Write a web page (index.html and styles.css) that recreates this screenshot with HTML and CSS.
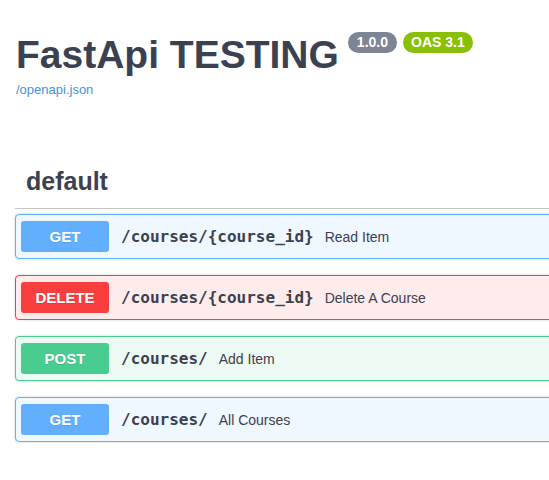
FILE: index.html
```html
<!DOCTYPE html>
<html lang="en">
<head>
<meta charset="utf-8">
<title>FastApi TESTING</title>
<link rel="stylesheet" href="styles.css">
</head>
<body>
<div class="wrapper">
  <div class="info">
    <h2 class="title">FastApi TESTING<span class="badges"><span class="badge version">1.0.0</span><span class="badge oas">OAS 3.1</span></span></h2>
    <a class="base-url" href="#">/openapi.json</a>
  </div>
  <section class="tag-section">
    <h3 class="tag">default</h3>
    <div class="ops">
      <div class="opblock get">
        <span class="method">GET</span>
        <span class="path">/courses/{course_id}</span>
        <span class="desc">Read Item</span>
      </div>
      <div class="opblock delete">
        <span class="method">DELETE</span>
        <span class="path">/courses/{course_id}</span>
        <span class="desc">Delete A Course</span>
      </div>
      <div class="opblock post">
        <span class="method">POST</span>
        <span class="path">/courses/</span>
        <span class="desc">Add Item</span>
      </div>
      <div class="opblock get">
        <span class="method">GET</span>
        <span class="path">/courses/</span>
        <span class="desc">All Courses</span>
      </div>
    </div>
  </section>
</div>
</body>
</html>
```

FILE: styles.css
```css
html, body {
  margin: 0;
  padding: 0;
  overflow: hidden;
  background: #fff;
}
body {
  font-family: "Liberation Sans", Arial, sans-serif;
  color: #3b4151;
}
.wrapper {
  width: 640px;
  padding: 0 0 0 15px;
}
.info {
  padding: 31px 0 0 1px;
}
.title {
  margin: 0;
  font-size: 39px;
  font-weight: 700;
  line-height: 48px;
  color: #3b4151;
  display: flex;
  align-items: flex-start;
}
.badges {
  display: flex;
  gap: 6px;
  margin: 1px 0 0 9px;
}
.badge {
  display: inline-block;
  font-size: 14px;
  font-weight: 700;
  color: #fff;
  line-height: 21px;
  height: 21px;
  padding: 0 9px;
  border-radius: 57px;
}
.version { background: #7d8492; }
.oas { background: #89bf04; padding: 0 8px; }
.base-url {
  display: block;
  margin-top: 3px;
  font-size: 13px;
  line-height: 16px;
  color: #4990e2;
  text-decoration: none;
}
.tag-section {
  margin-top: 68px;
}
.tag {
  margin: 0;
  padding: 0 0 12px 11px;
  font-size: 25px;
  line-height: 30px;
  font-weight: 700;
  border-bottom: 1px solid #c4c6cb;
}
.ops {
  padding-top: 5px;
}
.opblock {
  display: flex;
  align-items: center;
  height: 43px;
  padding: 0 5px;
  margin-bottom: 16px;
  border: 1px solid;
  border-radius: 4px;
  box-shadow: 0 0 3px rgba(0, 0, 0, .19);
}
.method {
  width: 88px;
  height: 31px;
  line-height: 31px;
  border-radius: 3px;
  color: #fff;
  font-size: 15px;
  font-weight: 700;
  text-align: center;
  text-shadow: 0 1px 0 rgba(0, 0, 0, .1);
}
.path {
  padding: 0 11px 0 12px;
  font-family: "DejaVu Sans Mono", "Liberation Mono", monospace;
  font-size: 16px;
  font-weight: 700;
  color: #3b4151;
}
.desc {
  font-size: 14px;
  color: #3b4151;
}
.get { background: #eff7ff; border-color: #61affe; }
.get .method { background: #61affe; }
.delete { background: #feecec; border-color: #f93e3e; }
.delete .method { background: #f93e3e; }
.post { background: #edfaf4; border-color: #49cc90; }
.post .method { background: #49cc90; }
```
